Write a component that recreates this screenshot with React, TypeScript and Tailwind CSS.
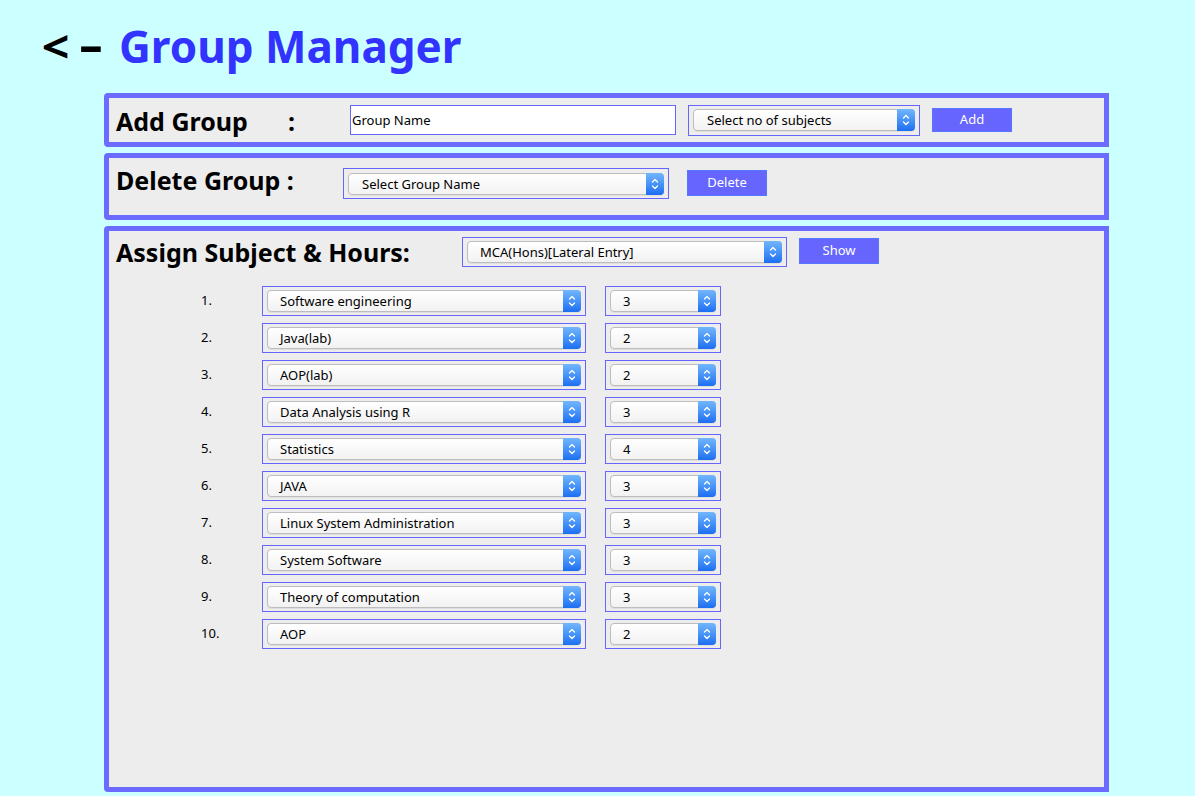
import React from 'react';

const rows = [
    { subject: 'Software engineering', hours: '3' },
    { subject: 'Java(lab)', hours: '2' },
    { subject: 'AOP(lab)', hours: '2' },
    { subject: 'Data Analysis using R', hours: '3' },
    { subject: 'Statistics', hours: '4' },
    { subject: 'JAVA', hours: '3' },
    { subject: 'Linux System Administration', hours: '3' },
    { subject: 'System Software', hours: '3' },
    { subject: 'Theory of computation', hours: '3' },
    { subject: 'AOP', hours: '2' },
];

// little blue up/down stepper at the right end of a popup
const Stepper = () => (
    <div className="-my-px -mr-px flex w-[18px] items-center justify-center rounded-r-[4px] bg-gradient-to-b from-[#72b6fc] to-[#1c6ef2]">
        <svg width="18" height="22" viewBox="0 0 18 22" fill="none">
            <path d="M6.5 9 L9 6.5 L11.5 9" stroke="white" strokeWidth="1.3" strokeLinecap="round" strokeLinejoin="round" />
            <path d="M6.5 13 L9 15.5 L11.5 13" stroke="white" strokeWidth="1.3" strokeLinecap="round" strokeLinejoin="round" />
        </svg>
    </div>
);

interface PopupProps {
    value: string;
    className: string;
    textClass?: string;
}

const Popup: React.FC<PopupProps> = ({ value, className, textClass = 'pl-3' }) => (
    <div className={`flex items-center border border-[#6666ff] px-[4px] ${className}`}>
        <div className="flex h-[22px] flex-1 rounded-[4px] border border-[#bdbdbd] bg-gradient-to-b from-white to-[#f2f2f2] shadow-[0_1px_0_rgba(0,0,0,0.06)]">
            <span className={`flex-1 truncate text-[13px] leading-[20px] text-black ${textClass}`}>{value}</span>
            <Stepper />
        </div>
    </div>
);

const Btn: React.FC<{ label: string; className: string }> = ({ label, className }) => (
    <button className={`flex w-[80px] items-center justify-center border border-[#5576ff] bg-[#6666ff] text-[13px] text-white ${className}`}>
        {label}
    </button>
);

export default function App() {
    return (
        <div className="min-h-[796px] bg-[#ccffff] font-['Noto_Sans',sans-serif] text-black">
            {/* Title */}
            <div className="flex h-[93px] pl-[43px] pt-[18px]">
                <h1 className="flex h-[56px] text-[44px] font-bold leading-[56px]">
                    <span className="flex w-[76px] text-black">
                        <span className="inline-block scale-x-110">&lt;</span>
                        <span className="ml-[16px] inline-block -translate-y-[2px] scale-x-[1.7]">-</span>
                    </span>
                    <span className="text-[#3333ff]">Group Manager</span>
                </h1>
            </div>

            <div className="ml-[104px] flex w-[1005px] flex-col gap-[6px]">
                {/* Add Group */}
                <div className="flex h-[54px] items-center rounded-l-[4px] border-[5px] border-[#6b6bff] bg-[#ededed] pl-[7px]">
                    <div className="mt-[2px] flex w-[234px] text-[25px] font-bold leading-[30px]">
                        <span className="w-[172px]">Add Group</span>
                        <span>:</span>
                    </div>
                    <input
                        readOnly
                        value="Group Name"
                        className="h-[30px] w-[326px] border border-[#6666ff] bg-white pl-px text-[13px] text-black outline-none"
                    />
                    <Popup value="Select no of subjects" className="ml-[12px] h-[31px] w-[232px]" textClass="pl-[13px]" />
                    <Btn label="Add" className="ml-[12px] h-[24px]" />
                </div>

                {/* Delete Group */}
                <div className="flex h-[67px] items-start rounded-l-[4px] border-[5px] border-[#6b6bff] bg-[#ededed] pl-[7px] pt-[7px]">
                    <div className="w-[227px] text-[25px] font-bold leading-[30px]">Delete Group :</div>
                    <Popup value="Select Group Name" className="mt-[3px] h-[31px] w-[326px]" textClass="pl-[13px]" />
                    <Btn label="Delete" className="ml-[18px] mt-[5px] h-[26px]" />
                </div>

                {/* Assign Subject & Hours */}
                <div className="flex h-[566px] flex-col rounded-l-[4px] border-[5px] border-[#6b6bff] bg-[#ededed] pt-[6px]">
                    <div className="flex items-start pl-[7px]">
                        <div className="w-[346px] text-[25px] font-bold leading-[30px]">Assign Subject &amp; Hours:</div>
                        <Popup value="MCA(Hons)[Lateral Entry]" className="h-[30px] w-[325px]" textClass="pl-[12px]" />
                        <Btn label="Show" className="ml-[12px] mt-px h-[26px]" />
                    </div>

                    <div className="mt-[19px] flex flex-col gap-[7px] pl-[92px]">
                        {rows.map((r, i) => (
                            <div key={i} className="flex h-[30px] items-center">
                                <span className="w-[61px] text-[13px]">{i + 1}.</span>
                                <Popup value={r.subject} className="h-[30px] w-[324px]" />
                                <Popup value={r.hours} className="ml-[19px] h-[30px] w-[116px]" />
                            </div>
                        ))}
                    </div>
                </div>
            </div>
        </div>
    );
}
